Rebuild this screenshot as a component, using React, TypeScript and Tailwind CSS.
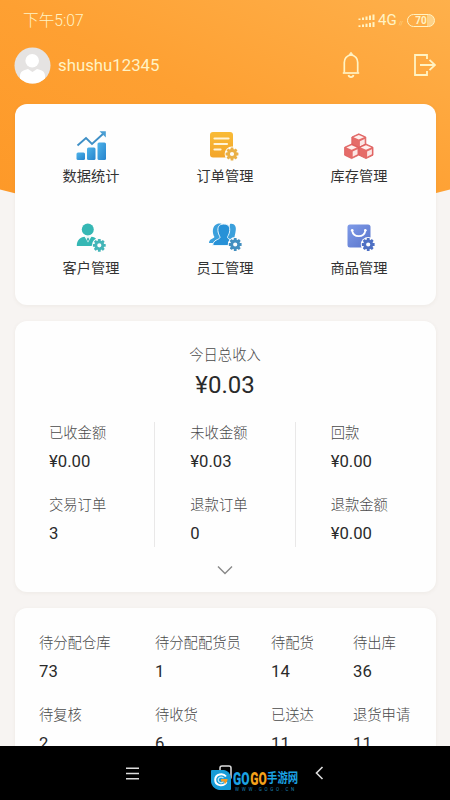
import type { ReactNode } from "react";

type Stat = { label: string; value: string };

const GEAR_TEETH = [0, 45, 90, 135, 180, 225, 270, 315];

function Gear({ cx, cy, color }: { cx: number; cy: number; color: string }) {
  return (
    <g transform={`translate(${cx} ${cy})`}>
      <circle r="7.4" fill="#fdfdfd" />
      {GEAR_TEETH.map((a) => (
        <rect key={a} x="-1.4" y="-6.4" width="2.8" height="3" rx="0.5" fill={color} transform={`rotate(${a})`} />
      ))}
      <circle r="3.5" fill="none" stroke={color} strokeWidth="2.8" />
    </g>
  );
}

function ChartIcon() {
  return (
    <svg width="32" height="32" viewBox="0 0 32 32">
      <defs>
        <linearGradient id="bars" x1="0" y1="0" x2="1" y2="1">
          <stop offset="0" stopColor="#4fb4ea" />
          <stop offset="1" stopColor="#2683cc" />
        </linearGradient>
      </defs>
      <rect x="1.5" y="22.5" width="8.5" height="7.5" rx="1.5" fill="url(#bars)" />
      <rect x="12" y="17.5" width="8.5" height="12.5" rx="1.5" fill="url(#bars)" />
      <rect x="22.5" y="12.5" width="8.5" height="17.5" rx="1.5" fill="url(#bars)" />
      <path d="M2.5 15.5 L11 8 L17 14 L28.5 3.5" fill="none" stroke="#3e8fc6" strokeWidth="1.9" />
      <path d="M24.5 1.2 H30.8 V7.5 Z" fill="#4a9fd4" />
    </svg>
  );
}

function OrderIcon() {
  return (
    <svg width="32" height="32" viewBox="0 0 32 32">
      <defs>
        <linearGradient id="order" x1="0" y1="0" x2="0" y2="1">
          <stop offset="0" stopColor="#f9bb36" />
          <stop offset="1" stopColor="#f3a52b" />
        </linearGradient>
      </defs>
      <rect x="1" y="2" width="23" height="25.5" rx="3" fill="url(#order)" />
      <path d="M5.5 8.5 H19.5 M5.5 14 H18 M5.5 19.5 H11.5" stroke="#fff4d8" strokeWidth="2.2" strokeLinecap="round" />
      <Gear cx={23} cy={24} color="#eab046" />
    </svg>
  );
}

function Cube({ x, y }: { x: number; y: number }) {
  return (
    <g transform={`translate(${x} ${y})`} strokeLinejoin="round">
      <path d="M0 -7.2 L7 -4 V4 L0 7.4 L-7 4 V-4 Z" fill="#e56c69" stroke="#dc5b5a" strokeWidth="0.8" />
      <path d="M0 -6 L5.2 -3.7 L0 -1.5 L-5.2 -3.7 Z" fill="#fff0ee" />
      <path d="M1.1 0.3 L5.9 -1.9 V3.1 L1.1 5.5 Z" fill="#fbe6e5" />
    </g>
  );
}

function StockIcon() {
  return (
    <svg width="32" height="32" viewBox="0 0 32 32">
      <Cube x={15.8} y={11} />
      <Cube x={8.6} y={21.2} />
      <Cube x={23} y={21.2} />
    </svg>
  );
}

function CustomerIcon() {
  return (
    <svg width="32" height="32" viewBox="0 0 32 32">
      <circle cx="12.8" cy="7.6" r="6" fill="#35b7b4" />
      <path d="M1.8 24 C1.8 18 5.5 15.3 9.5 14.8 L13 18 L16.5 14.8 C21 15.3 23 18 23 24 Z" fill="#35b7b4" />
      <path d="M9.8 15 L13 13.8 L16.2 15 L13 20.5 Z" fill="#e9f8f7" />
      <path d="M13 15.6 L14.2 17 L13 19.5 L11.8 17 Z" fill="#35a9ab" />
      <Gear cx={24.3} cy={23.3} color="#43b5b8" />
    </svg>
  );
}

function StaffIcon() {
  return (
    <svg width="34" height="32" viewBox="-2 0 34 32">
      <path d="M7 2 C10 1 12 2 12 2 L9 9 L10 16 L8 21 H-1 C-1 17 3 17 4.5 15 C2 11 2 4 7 2 Z" fill="#3ba0dc" />
      <path d="M20 2 C24 1 27 4 25.5 10 C25 14 23.5 15 26 16.5 C29 17.5 29 19 29 21 H20 L17 15 L19 8 Z" fill="#3ba0dc" />
      <path d="M13.8 2 C19 2 20.3 5.3 19.5 10 C19 13 17.5 14 17.5 15.5 C18.5 18 24 17.5 24.5 23.5 H2.8 C3 17.5 9 18 10 15.5 C10 14 8.6 13 8.1 10 C7.3 5.3 8.7 2 13.8 2 Z" fill="#2791d7" stroke="#e8f6fd" strokeWidth="1" />
      <Gear cx={25.2} cy={22.5} color="#438fc0" />
    </svg>
  );
}

function GoodsIcon() {
  return (
    <svg width="32" height="32" viewBox="0 0 32 32">
      <defs>
        <linearGradient id="goods" x1="0" y1="0" x2="1" y2="1">
          <stop offset="0" stopColor="#7f9be8" />
          <stop offset="1" stopColor="#5974cb" />
        </linearGradient>
      </defs>
      <rect x="4.5" y="2.5" width="23" height="23" rx="2.5" fill="url(#goods)" />
      <path d="M9 8.5 C10.5 16 21 16 22.5 8.5" fill="none" stroke="#fff" strokeWidth="1.7" strokeLinecap="round" />
      <circle cx="9.2" cy="8.3" r="1.3" fill="#fff" />
      <circle cx="22.3" cy="8.3" r="1.3" fill="#fff" />
      <Gear cx={25.2} cy={22.5} color="#4e70c4" />
    </svg>
  );
}

const menu: { label: string; icon: ReactNode }[] = [
  { label: "数据统计", icon: <ChartIcon /> },
  { label: "订单管理", icon: <OrderIcon /> },
  { label: "库存管理", icon: <StockIcon /> },
  { label: "客户管理", icon: <CustomerIcon /> },
  { label: "员工管理", icon: <StaffIcon /> },
  { label: "商品管理", icon: <GoodsIcon /> },
];

const income: Stat[][] = [
  [
    { label: "已收金额", value: "¥0.00" },
    { label: "交易订单", value: "3" },
  ],
  [
    { label: "未收金额", value: "¥0.03" },
    { label: "退款订单", value: "0" },
  ],
  [
    { label: "回款", value: "¥0.00" },
    { label: "退款金额", value: "¥0.00" },
  ],
];

const orders: Stat[] = [
  { label: "待分配仓库", value: "73" },
  { label: "待分配配货员", value: "1" },
  { label: "待配货", value: "14" },
  { label: "待出库", value: "36" },
  { label: "待复核", value: "2" },
  { label: "待收货", value: "6" },
  { label: "已送达", value: "11" },
  { label: "退货申请", value: "11" },
];

function StatCell({ label, value }: Stat) {
  return (
    <div className="whitespace-nowrap">
      <div className="flex h-7 items-center text-[14.3px] font-light text-[#4a4a4a]">{label}</div>
      <div className="flex h-7 items-center pb-px text-[16.7px] text-[#2a2a2a]">{value}</div>
    </div>
  );
}

function SignalBars() {
  return (
    <svg width="18" height="14" viewBox="0 0 18 14" fill="#fff3c4">
      {[0, 1, 2, 3, 4].map((i) => (
        <g key={i}>
          <rect x={0.5 + i * 3.5} y={4.5 - i} width="2" height={1.5 + i} />
          <rect x={0.5 + i * 3.5} y={11.3 - i * 0.8} width="2" height={1.7 + i * 0.8} />
        </g>
      ))}
    </svg>
  );
}

function StatusBar() {
  return (
    <div className="flex h-10 items-center justify-between pl-[23px] pr-[15px] pt-0.5 text-[#fff3c4]">
      <span className="text-[15.7px] font-light">下午5:07</span>
      <div className="-mt-px flex items-center">
        <SignalBars />
        <span className="ml-0.5 text-[15px]">4G</span>
        <span className="ml-0.5 mr-1 mt-1 text-[6px] opacity-60">//</span>
        <span className="flex h-[13px] w-7 items-center justify-center rounded-full border border-[#fff3c4] bg-linear-to-r from-transparent from-75% to-[#fff3c4]/50 to-75% text-[10px] font-bold leading-none">
          70
        </span>
      </div>
    </div>
  );
}

function UserBar() {
  return (
    <div className="flex h-[50px] items-center pl-[14px] pr-[14px] text-[#fff3c4]">
      <svg width="37" height="37" viewBox="0 0 37 37">
        <defs>
          <clipPath id="avatar">
            <circle cx="18.5" cy="18.5" r="18" />
          </clipPath>
        </defs>
        <circle cx="18.5" cy="18.5" r="18" fill="#e5e3e2" />
        <g clipPath="url(#avatar)" fill="#fff">
          <circle cx="18.2" cy="13.8" r="6.8" />
          <path d="M6 38 V29 C6 24.5 9.5 23 14 22 L18.5 25 L23 22 C28 23 31 24.5 31 29 V38 Z" />
        </g>
      </svg>
      <span className="ml-[7px] flex-1 pt-0.5 text-[16.8px]">shushu12345</span>
      <svg width="20" height="28" viewBox="0 0 20 28" fill="none" stroke="#fff3c4" strokeWidth="1.7">
        <path d="M3.3 21.5 V11.5 C3.3 7 6 4.8 10 3.8 C14 4.8 16.7 7 16.7 11.5 V21.5" />
        <path d="M1.8 22 H18.2" />
        <path d="M7.5 4.5 L10 1.2 L12.5 4.5 Z" fill="#fff3c4" strokeWidth="0.8" />
        <path d="M7.5 24 C8 26.7 12 26.7 12.5 24" />
      </svg>
      <svg className="ml-[52px]" width="23" height="24" viewBox="0 0 23 24" fill="none" stroke="#fff3c4" strokeWidth="1.8">
        <path d="M14 6 V2 H2 V22 H14 V18" />
        <path d="M7 12 H21.5 M16.5 6.8 L22 12 L16.5 17.2" />
      </svg>
    </div>
  );
}

function NavBar() {
  return (
    <nav className="relative z-10 h-[54px] shrink-0 bg-black">
      <div className="flex h-full items-center">
        <svg className="ml-[126px]" width="13" height="13" viewBox="0 0 13 13" stroke="#ddd" strokeWidth="1.5">
          <path d="M0 1.2 H13 M0 6.5 H13 M0 11.8 H13" />
        </svg>
        <svg className="-mt-px ml-[80px]" width="13" height="15" viewBox="0 0 13 15" fill="none" stroke="#ddd" strokeWidth="1.5">
          <rect x="1" y="1" width="11" height="13" rx="2" />
        </svg>
        <svg className="ml-[83px]" width="9" height="14" viewBox="0 0 9 14" fill="none" stroke="#ddd" strokeWidth="1.6">
          <path d="M7.5 1 L1.5 7 L7.5 13" />
        </svg>
      </div>
      {/* site badge over the home button */}
      <div className="absolute left-[211px] top-6 flex items-start">
        <svg width="20" height="20" viewBox="0 0 20 20">
          <path d="M0 1 Q0 0 1 0 H13 C18 1 20 5 20 9 V19 Q20 20 19 20 H8 C3 19 0 15 0 11 Z" fill="#169bd7" />
          <path d="M15 6.5 C12 2.5 4.5 4 4.2 9.5 C4 16 12.5 17.2 15.5 12" fill="none" stroke="#fff" strokeWidth="2" />
          <path d="M12.5 8 C10 6 7 7.5 7.2 10 C7.5 13 11 13.5 12.5 11.5" fill="none" stroke="#b9e7fa" strokeWidth="1.3" />
          <path d="M10 9 H16.5 C16.5 11.5 15.5 13 13.5 14 V11.5 H10 Z" fill="#f59a23" />
        </svg>
        <div className="ml-[2px] w-[66px]">
          <div className="flex h-[17px] items-center whitespace-nowrap">
            <svg width="34" height="17" viewBox="0 0 34 17" className="shrink-0 font-['Roboto',sans-serif] text-[18.5px] font-black">
              <text x="0" y="15" textLength="16.5" lengthAdjust="spacingAndGlyphs" fill="#1ba2e4">GO</text>
              <text x="17.2" y="15" textLength="16.5" lengthAdjust="spacingAndGlyphs" fill="#f6a21b">GO</text>
            </svg>
            <span className="scale-y-125 text-[10.4px] font-bold leading-none text-[#1ba2e4]">手游网</span>
          </div>
          <div className="whitespace-nowrap pl-0.5 text-[4.5px] leading-[5px] tracking-[2.7px] text-[#1c82b5]">WWW.GOGO.CN</div>
        </div>
      </div>
    </nav>
  );
}

export default function App() {
  return (
    <div className="flex h-[800px] w-[450px] flex-col overflow-hidden bg-[#f7f4f2] font-['Roboto','Noto_Sans_CJK_SC',sans-serif]">
      <main className="relative isolate min-h-0 flex-1 overflow-hidden">
        <svg className="absolute inset-x-0 top-0 -z-10" width="450" height="225" viewBox="0 0 450 225">
          <defs>
            <linearGradient id="header" x1="0" y1="1" x2="1" y2="0">
              <stop offset="0" stopColor="#fd9827" />
              <stop offset="0.5" stopColor="#fea032" />
              <stop offset="1" stopColor="#feb04b" />
            </linearGradient>
          </defs>
          <path d="M0 0 H450 V189.5 Q225 250 0 189.5 Z" fill="url(#header)" />
        </svg>

        <StatusBar />
        <UserBar />

        <div className="mt-[14px] flex flex-col gap-4 pl-[15px] pr-[14px]">
          <section className="grid h-[201px] grid-cols-3 content-start gap-y-9 rounded-xl bg-[#fefefe] pl-[9px] pr-[10px] pt-[26px] shadow-[0_1px_4px_rgba(90,60,30,0.06)]">
            {menu.map((item) => (
              <div key={item.label} className="flex h-14 flex-col items-center">
                {item.icon}
                <span className="mt-1 text-[14.2px] leading-5 text-[#333]">{item.label}</span>
              </div>
            ))}
          </section>

          <section className="h-[271px] rounded-xl bg-[#fefefe] pt-[21px] shadow-[0_1px_4px_rgba(90,60,30,0.06)]">
            <div className="flex h-7 items-center justify-center pr-px text-[14.3px] font-light text-[#4a4a4a]">今日总收入</div>
            <div className="flex h-[30px] items-center justify-center pr-px text-[24px] text-[#2a2a2a]">¥0.03</div>
            <div className="mt-[22px] grid grid-cols-3 divide-x divide-[#e9e8e8]">
              {income.map((col) => (
                <div key={col[0].label} className="flex pl-[35px] first:pl-[34px]">
                  <div className="-mb-px -mt-0.5 flex flex-col gap-4">
                    {col.map((s) => (
                      <StatCell key={s.label} {...s} />
                    ))}
                  </div>
                </div>
              ))}
            </div>
            <svg className="ml-[202px] mt-[18px]" width="16" height="10" viewBox="0 0 16 10" fill="none" stroke="#888" strokeWidth="1.4">
              <path d="M1 1.5 L8 8.5 L15 1.5" />
            </svg>
          </section>

          <section className="grid h-[200px] grid-cols-[116px_116px_82px_1fr] content-start gap-y-4 rounded-xl bg-[#fefefe] pl-6 pt-[22px] shadow-[0_1px_4px_rgba(90,60,30,0.06)]">
            {orders.map((s) => (
              <StatCell key={s.label} {...s} />
            ))}
          </section>
        </div>
      </main>
      <NavBar />
    </div>
  );
}
